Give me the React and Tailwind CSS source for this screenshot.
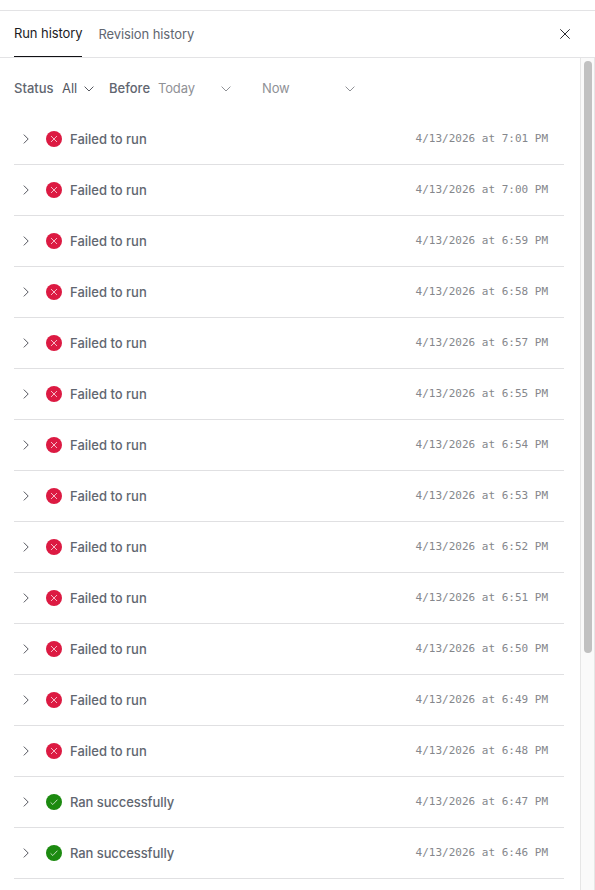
import React, { useState } from "react";

const runs = [
  { time: "7:01 PM", ok: false },
  { time: "7:00 PM", ok: false },
  { time: "6:59 PM", ok: false },
  { time: "6:58 PM", ok: false },
  { time: "6:57 PM", ok: false },
  { time: "6:55 PM", ok: false },
  { time: "6:54 PM", ok: false },
  { time: "6:53 PM", ok: false },
  { time: "6:52 PM", ok: false },
  { time: "6:51 PM", ok: false },
  { time: "6:50 PM", ok: false },
  { time: "6:49 PM", ok: false },
  { time: "6:48 PM", ok: false },
  { time: "6:47 PM", ok: true },
  { time: "6:46 PM", ok: true },
];

function ChevronDown({ className }) {
  return (
    <svg width="10" height="6" viewBox="0 0 10 6" fill="none" stroke="currentColor" className={className}>
      <path d="M0.6 0.6L5 5L9.4 0.6" />
    </svg>
  );
}

function StatusIcon({ ok }) {
  return (
    <svg width="16" height="16" viewBox="0 0 16 16" fill="none" className="shrink-0">
      <circle cx="8" cy="8" r="8" fill={ok ? "#1c8a10" : "#dc1a42"} />
      <path
        d={ok ? "M4.6 8.4L6.8 10.5L11.4 5.7" : "M5 5L11 11M11 5L5 11"}
        stroke="white"
        strokeWidth="0.7"
      />
    </svg>
  );
}

function RunRow({ run }) {
  return (
    <div className="flex h-[51px] items-center border-b border-[#e0e0e2] pr-4 pl-[9px]">
      <svg width="6" height="10" viewBox="0 0 6 10" fill="none" stroke="#55575f" className="mr-[17px] shrink-0">
        <path d="M0.8 0.6L5.2 5L0.8 9.4" />
      </svg>
      <StatusIcon ok={run.ok} />
      <span
        className={`ml-2 pt-0.5 text-[13px] font-medium text-[#616670] ${run.ok ? "tracking-[-0.08px]" : ""}`}
      >
        {run.ok ? "Ran successfully" : "Failed to run"}
      </span>
      <span className="ml-auto font-['DejaVu_Sans_Mono',monospace] text-[11px] text-[#85878c]">
        4/13/2026 at {run.time}
      </span>
    </div>
  );
}

export default function App() {
  const [tab, setTab] = useState("run");

  const tabClass = (name) =>
    tab === name
      ? "border-b border-[#111114] text-[#1b1b1f]"
      : "pt-0.5 text-[#616670]";

  return (
    <div className="flex h-[890px] w-[595px] flex-col overflow-hidden bg-white pt-2.5 font-['Inter',sans-serif] text-[13px]">
      <header className="flex h-12 shrink-0 items-stretch border-y border-[#e3e3e5] px-3.5">
        <div className="flex gap-4 tracking-[-0.09px]">
          <button onClick={() => setTab("run")} className={tabClass("run")}>
            Run history
          </button>
          <button onClick={() => setTab("revision")} className={tabClass("revision")}>
            Revision history
          </button>
        </div>
        <button aria-label="Close" className="mr-2.5 ml-auto">
          <svg width="10" height="10" viewBox="0 0 10 10" fill="none" stroke="#2b2b30" className="mr-px">
            <path d="M0.3 0.3L9.7 9.7M9.7 0.3L0.3 9.7" />
          </svg>
        </button>
      </header>
      <div className="flex min-h-0 flex-1">
        <main className="w-[580px] shrink-0 overflow-hidden pr-4 pl-3.5">
          <div className="flex h-14 items-center pt-1.5">
            <span className="w-10 font-medium text-[#616670]">Status</span>
            <button className="ml-2 flex w-8 items-center justify-between text-[#55575f]">
              All
              <ChevronDown />
            </button>
            <span className="ml-[15px] w-[41px] font-medium text-[#616670]">Before</span>
            <button className="ml-2 flex w-[73px] items-center justify-between text-[#8f9196]">
              <span className="tracking-[-0.15px]">Today</span>
              <ChevronDown />
            </button>
            <button className="ml-[31px] flex w-[93px] items-center justify-between text-[#8f9196]">
              <span className="tracking-[-0.15px]">Now</span>
              <ChevronDown />
            </button>
          </div>
          {runs.map((run) => (
            <RunRow key={run.time} run={run} />
          ))}
        </main>
        <div className="w-[15px] border-x border-[#e6e6e6] bg-[#fafafa] px-[3px] pt-[3px]">
          <div className="h-[592px] w-2 rounded-full bg-[#c1c1c1]" />
        </div>
      </div>
    </div>
  );
}
